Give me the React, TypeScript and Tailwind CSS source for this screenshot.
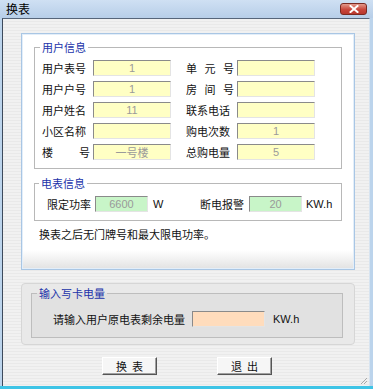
import React from 'react';

const cjk = "font-['Noto_Sans_CJK_SC','Noto_Sans',sans-serif]";
const latin = "font-['Liberation_Sans',Arial,sans-serif]";

function Field({ value, tone, width = 'w-[78px]' }: { value?: string; tone: string; width?: string }) {
  return (
    <div
      className={`${width} h-[16px] ${tone} border border-t-[#8a8a8a] border-l-[#8a8a8a] border-b-[#e4e4e4] border-r-[#e4e4e4] flex items-center justify-center text-[11px] text-[#9a9a9a] leading-none ${value && /[0-9]/.test(value) ? latin : cjk}`}
    >
      {value}
    </div>
  );
}

function Label({ chars, spread }: { chars: string; spread?: boolean }) {
  if (spread) {
    return (
      <div className="w-[48px] flex justify-between">
        {chars.split('').map((c, i) => (
          <span key={i}>{c}</span>
        ))}
      </div>
    );
  }
  return <div className="w-[48px] whitespace-nowrap">{chars}</div>;
}

function Row({ label, spread, value }: { label: string; spread?: boolean; value?: string }) {
  return (
    <div className="flex items-center h-[16px]">
      <div className="w-[51px]">
        <Label chars={label} spread={spread} />
      </div>
      <Field value={value} tone="bg-[#ffffc4]" />
    </div>
  );
}

export default function App() {
  return (
    <div className={`w-[373px] h-[389px] bg-[#bcd4ec] flex flex-col ${cjk} text-[11px] leading-[14px] text-[#111]`}>
      {/* title bar */}
      <div className="h-[18px] flex items-center justify-between pl-[6px] pr-[6px] bg-[linear-gradient(to_bottom,#cfe0f3,#b7cee8)]">
        <span className="text-[12px] text-black">换表</span>
        <div className="w-[27px] h-[12px] rounded-[3px] border border-[#7a2a22] bg-[linear-gradient(to_bottom,#e39a8c,#c9473c_55%,#b8382e)] flex items-center justify-center">
          <svg width="10" height="8" viewBox="0 0 10 8">
            <path d="M1.5 1 L8.5 7 M8.5 1 L1.5 7" stroke="#fff" strokeWidth="2" strokeLinecap="square" />
          </svg>
        </div>
      </div>

      {/* body */}
      <div className="ml-[2px] mr-[3px] h-[368px] border-l border-t border-l-[#3d4a5c] border-t-[#56657a] border-r border-r-[#d8e4f0] bg-[repeating-linear-gradient(to_bottom,#f1f1f1_0px,#f1f1f1_2px,#e9e9e9_2px,#e9e9e9_3px)] flex flex-col">
        {/* white panel */}
        <div className="ml-[18px] mt-[14px] w-[334px] h-[237px] border border-[#a9c6e4] shadow-[inset_0_0_0_1px_#e3eef9] bg-[linear-gradient(to_bottom,#ffffff_0,#ffffff_92%,#e2e2e2_100%)] px-[12px] pt-[6px] flex flex-col">
          <fieldset className="border border-[#b8b8b8] pt-[6px] pb-[8px] w-[308px]">
            <legend className="ml-[5px] px-[2px] text-[#2233aa] leading-[14px]">用户信息</legend>
            <div className="flex pl-[7px]">
              <div className="flex flex-col gap-[5px]">
                <Row label="用户表号" value="1" />
                <Row label="用户户号" value="1" />
                <Row label="用户姓名" value="11" />
                <Row label="小区名称" />
                <Row label="楼号" spread value="一号楼" />
              </div>
              <div className="ml-[15px] flex flex-col gap-[5px]">
                <Row label="单元号" spread />
                <Row label="房间号" spread />
                <Row label="联系电话" />
                <Row label="购电次数" value="1" />
                <Row label="总购电量" value="5" />
              </div>
            </div>
          </fieldset>

          <fieldset className="mt-[7px] border border-[#b8b8b8] pt-[6px] pb-[8px] w-[308px]">
            <legend className="ml-[4px] px-[2px] text-[#2233aa] leading-[14px]">电表信息</legend>
            <div className="flex items-center h-[16px] pl-[12px]">
              <span className="w-[48px] whitespace-nowrap">限定功率</span>
              <Field value="6600" tone="bg-[#c8f5c8]" width="w-[53px]" />
              <span className={`ml-[5px] w-[47px] ${latin} text-[11px]`}>W</span>
              <span className="w-[49px] whitespace-nowrap">断电报警</span>
              <Field value="20" tone="bg-[#c8f5c8]" width="w-[53px]" />
              <span className={`ml-[4px] ${latin} text-[11px]`}>KW.h</span>
            </div>
          </fieldset>

          <div className="mt-[6px] pl-[5px] whitespace-nowrap">换表之后无门牌号和最大限电功率。</div>
        </div>

        {/* card amount group */}
        <div className="ml-[18px] mt-[13px] w-[334px] h-[62px] rounded-[4px] border border-[#d6d6d6] bg-[#e9e9e9] pl-[9px] pt-[2px]">
          <fieldset className="w-[312px] border border-[#bdbdbd] bg-[#e1e1e1] pt-[11px] pb-[10px]">
            <legend className="ml-[5px] px-[2px] text-[#2233aa] leading-[14px]">输入写卡电量</legend>
            <div className="flex items-center h-[16px] pl-[21px]">
              <span className="w-[139px] whitespace-nowrap">请输入用户原电表剩余电量</span>
              <Field tone="bg-[#ffdcbc]" width="w-[73px]" />
              <span className={`ml-[8px] ${latin} text-[11px]`}>KW.h</span>
            </div>
          </fieldset>
        </div>

        {/* buttons */}
        <div className="mt-[12px] flex pl-[99px] gap-[60px]">
          <button className="w-[55px] h-[18px] bg-[#f6f6f6] border border-t-[#ffffff] border-l-[#ffffff] border-b-[#555] border-r-[#555] shadow-[inset_-1px_-1px_0_#a0a0a0] text-[11px] tracking-[5px] flex items-center justify-center pl-[5px]">
            换表
          </button>
          <button className="w-[55px] h-[18px] bg-[#f6f6f6] border border-t-[#ffffff] border-l-[#ffffff] border-b-[#555] border-r-[#555] shadow-[inset_-1px_-1px_0_#a0a0a0] text-[11px] tracking-[5px] flex items-center justify-center pl-[5px]">
            退出
          </button>
        </div>

        <div className="flex-1 flex items-end justify-end pr-[1px] pb-[1px]">
          <svg width="9" height="9" viewBox="0 0 9 9">
            <path d="M8 2 L2 8 M8 5 L5 8" stroke="#a8a8a8" strokeWidth="1" />
          </svg>
        </div>
      </div>
      <div className="h-[3px] bg-[#3ec4e6]" />
    </div>
  );
}
